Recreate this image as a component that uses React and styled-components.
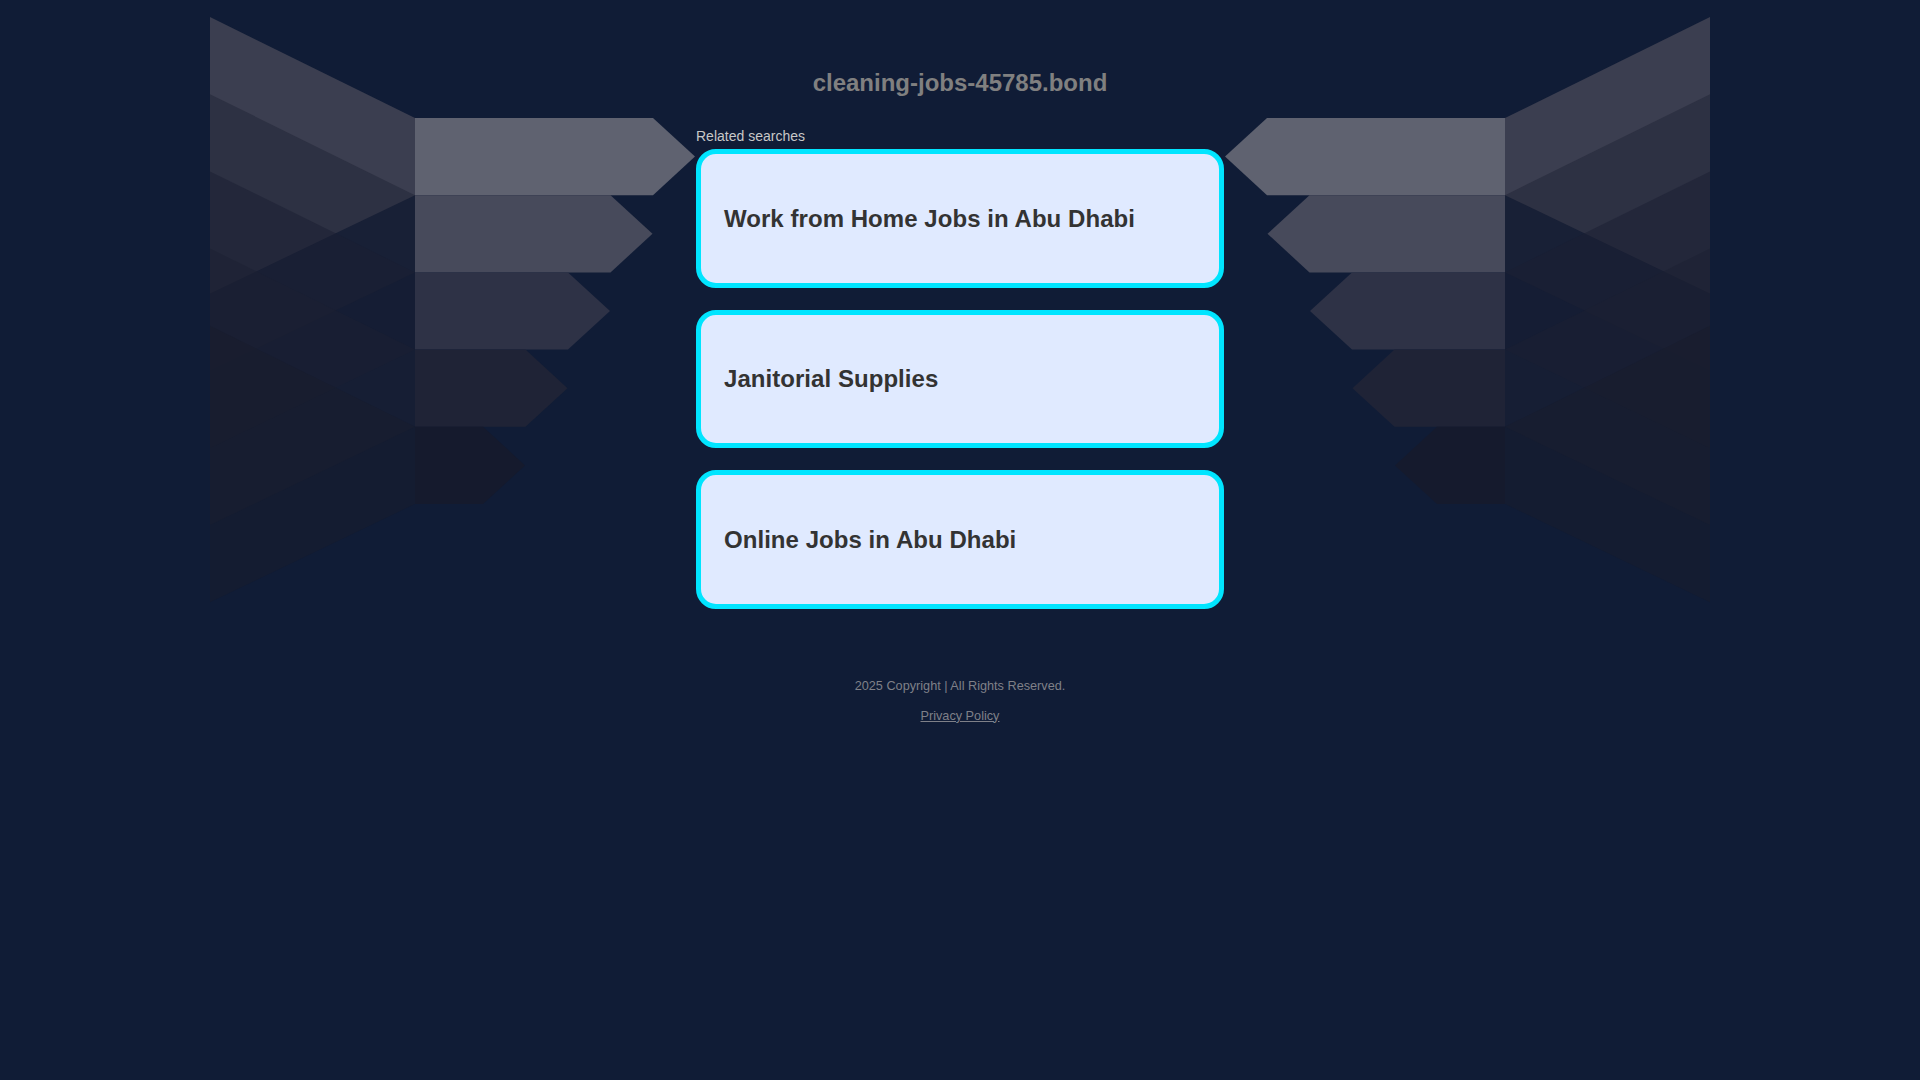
import React from 'react';
import styled, { createGlobalStyle } from 'styled-components';

// page wide defaults
const GlobalStyle = createGlobalStyle`
  html, body {
    margin: 0;
    padding: 0;
    background: #101c36;
  }
  body {
    font-family: "Liberation Sans", Arial, sans-serif;
    min-height: 1080px;
  }
`;

const Page = styled.div`
  position: relative;
  width: 100%;
  min-height: 1080px;
  overflow: hidden;
`;

// the grey "wings" drawing sits behind the content
const Wings = styled.svg`
  position: absolute;
  top: 0;
  left: 50%;
  transform: translateX(-50%);
  z-index: 0;
`;

const Content = styled.main`
  position: relative;
  z-index: 1;
  display: flex;
  flex-direction: column;
  align-items: center;
  padding-top: 69px;
`;

const Title = styled.h1`
  margin: 0;
  font-size: 24px;
  font-weight: bold;
  line-height: normal;
  color: #808080;
`;

const Results = styled.section`
  width: 528px;
  margin-top: 31px;
  display: flex;
  flex-direction: column;
`;

const Label = styled.div`
  font-size: 14px;
  line-height: normal;
  color: #c8c8c8;
  margin-bottom: 5px;
`;

const List = styled.div`
  display: flex;
  flex-direction: column;
  gap: 22px;
`;

const Card = styled.a`
  box-sizing: border-box;
  height: 138.5px;
  display: flex;
  align-items: center;
  padding: 1px 23px 0;
  background: #e0eaff;
  border: 5px solid #00e5ff;
  border-radius: 20px;
  font-size: 24px;
  font-weight: bold;
  letter-spacing: 0.05px;
  color: #333333;
  text-decoration: none;
  cursor: pointer;
`;

const Footer = styled.footer`
  margin-top: 70px;
  display: flex;
  flex-direction: column;
  align-items: center;
  gap: 16px;
  font-size: 12.7px;
  line-height: normal;
  color: #7f8088;
`;

const Policy = styled.a`
  color: #7f8088;
  text-decoration: underline;
`;

const step = 77.2;
const wallFills = ['#65606a', '#202436', '#191d31', '#1c1f32', '#181c2c'];
const barFills = ['#5f6270', '#474a5b', '#2e3246', '#1f2336', '#151a2d'];

function Wing() {
  return (
    <g>
      {wallFills.map((c, i) => (
        <polygon
          key={'w' + i}
          fill={c}
          fillOpacity="0.5"
          points={`210,${17 + step * i} 415,${118 + step * i} 415,${195.2 + step * i} 210,${293.5 + step * i}`}
        />
      ))}
      {barFills.map((c, i) => (
        <polygon
          key={'b' + i}
          fill={c}
          points={`415,${118 + step * i} ${653 - 42.5 * i},${118 + step * i} ${695 - 42.5 * i},${156.6 + step * i} ${653 - 42.5 * i},${195.2 + step * i} 415,${195.2 + step * i}`}
        />
      ))}
    </g>
  );
}

const searches = [
  'Work from Home Jobs in Abu Dhabi',
  'Janitorial Supplies',
  'Online Jobs in Abu Dhabi',
];

export default function App() {
  return (
    <Page>
      <GlobalStyle />
      <Wings width="1920" height="620" viewBox="0 0 1920 620" aria-hidden="true">
        <Wing />
        <g transform="translate(1920,0) scale(-1,1)">
          <Wing />
        </g>
      </Wings>

      <Content>
        <Title>cleaning-jobs-45785.bond</Title>

        <Results>
          <Label>Related searches</Label>
          <List>
            {searches.map((s) => (
              <Card key={s}>{s}</Card>
            ))}
          </List>
        </Results>

        <Footer>
          <div>2025 Copyright | All Rights Reserved.</div>
          <Policy>Privacy Policy</Policy>
        </Footer>
      </Content>
    </Page>
  );
}
